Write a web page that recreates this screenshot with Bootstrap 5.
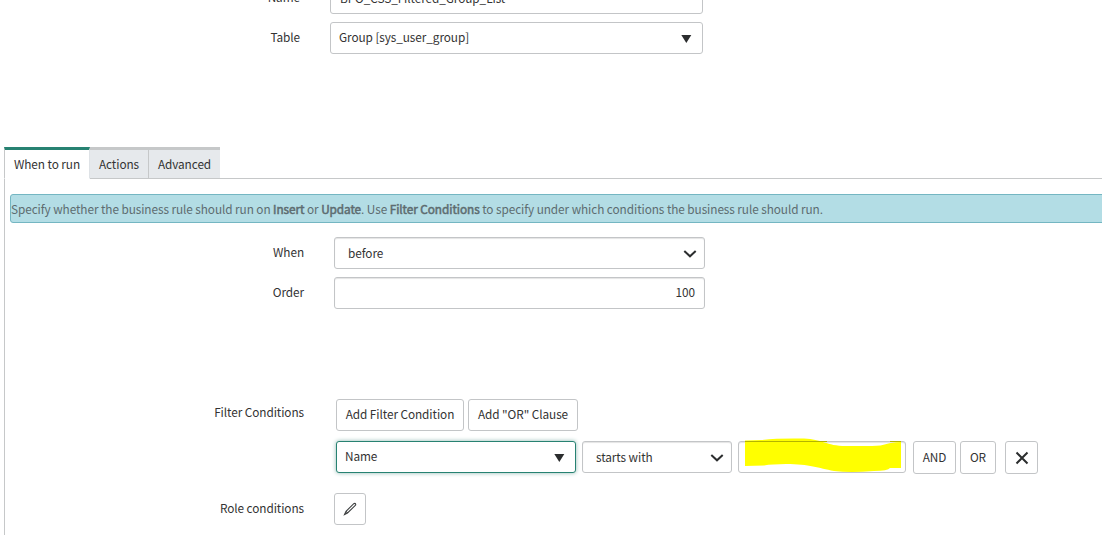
<!DOCTYPE html>
<html lang="en">
<head>
<meta charset="utf-8">
<meta name="viewport" content="width=device-width, initial-scale=1">
<title>Business Rule</title>
<link rel="stylesheet" href="https://cdn.jsdelivr.net/npm/bootstrap@5.3.0/dist/css/bootstrap.min.css">
<style>
body{font-family:"Noto Sans CJK SC","Noto Sans",sans-serif;font-size:11.8px;letter-spacing:-.075px;line-height:18px;color:#333;background:#fff}
.page{height:535px}
.head-fields{height:165px;margin-top:-18px}
.field-label{flex:none;width:300px;text-align:right;line-height:30px}
.rule-panel .field-label{width:299px}
.box{height:32px;border:1px solid #c3c5c7;border-radius:3px;background:#fff;padding:0 8px;line-height:28px;white-space:nowrap;color:inherit;font-size:inherit;letter-spacing:inherit}
.box.d-flex>span{margin-top:-2px}
.w-head{width:373px;margin-left:30px}
.w-main{width:371px;margin-left:30px}
.box.inset-top{box-shadow:inset 0 1px 1px #e4e4e4}
.box.choice{padding:1px 7px 0 13px}
.rule-tabs{padding-left:4px;height:32px;border:0;flex-wrap:nowrap}
.rule-tabs .nav-link{height:32px;border:0;border-radius:0;border-top:3px solid #c6c8c9;border-bottom:1px solid #c6c8c9;border-right:1px solid #c6c8c9;background:#e6e9ec;color:#333;padding:0;text-align:center;line-height:27px;margin:0}
.rule-tabs .nav-link.active{border-top-color:#278272;border-left:1px solid #c6c8c9;border-bottom-color:#fff;background:#fff;color:#333}
.tab-rule{border-bottom:1px solid #c6c8c9}
.rule-panel{margin-left:4px;height:356px;border-left:1px solid #c6c8c9;padding-top:15px}
.info{height:29px;margin:0 -4px 14px 5px;border:1px solid #74b6c2;border-radius:3px;background:#b3dde5;color:#5d6c70;padding:0;line-height:27px;white-space:nowrap}
.info b{font-weight:400;-webkit-text-stroke:.5px #5d6c70}
.focused{border-color:#278272!important;box-shadow:0 0 4px #8fb9b2}
.btn.box{padding:0;text-align:center;flex:none}
.btn.box.text-btn{padding-bottom:2px}
svg{display:block;flex:none}
.marker{position:absolute;left:5px;top:-5px}
</style>
</head>
<body>
<div class="page overflow-hidden">
  <section class="head-fields">
    <div class="d-flex mb-2"><label class="field-label">Name</label><div class="box w-head" style="line-height:30px"><span style="margin-left:1px">BPO_CSS_Filtered_Group_List</span></div></div>
    <div class="d-flex"><label class="field-label">Table</label>
      <div class="box w-head d-flex justify-content-between align-items-center"><span>Group [sys_user_group]</span><svg width="18" height="12" viewBox="0 0 18 12"><path d="M5.300 3h10l-5 8z" fill="#2b2d2e"/></svg></div></div>
  </section>
  <nav class="d-flex">
    <div class="nav nav-tabs rule-tabs">
      <a class="nav-link active" style="width:86px">When to run</a>
      <a class="nav-link" style="width:59px">Actions</a>
      <a class="nav-link" style="width:71px;border-right:0">Advanced</a>
    </div>
    <div class="tab-rule flex-grow-1"></div>
  </nav>
  <section class="rule-panel">
    <div class="alert info">Specify whether the business rule should run on <b>Insert</b> or <b>Update</b>. Use <b>Filter Conditions</b> to specify under which conditions the business rule should run.</div>
    <div class="d-flex mb-2"><label class="field-label">When</label>
      <div class="box choice w-main inset-top d-flex justify-content-between align-items-center"><span>before</span><svg width="14" height="10" viewBox="0 0 14 10"><path d="M1.300 2l5.700 5.300L12.700 2" fill="none" stroke="#2b2d2e" stroke-width="2"/></svg></div></div>
    <div class="d-flex"><label class="field-label">Order</label><div class="box w-main inset-top text-end" style="padding-right:9px">100</div></div>
    <div class="d-flex" style="margin-top:90px"><label class="field-label" style="line-height:26px">Filter Conditions</label>
      <div style="margin-left:32px">
        <div class="d-flex gap-1" style="margin-bottom:10px">
          <button class="btn box text-btn" style="width:128px">Add Filter Condition</button>
          <button class="btn box text-btn" style="width:110px">Add "OR" Clause</button>
        </div>
        <div class="d-flex">
          <div class="box focused d-flex justify-content-between align-items-center" style="width:240px"><span>Name</span><svg width="18" height="12" viewBox="0 0 18 12"><path d="M5.300 3h10l-5 8z" fill="#2b2d2e"/></svg></div>
          <div class="box choice inset-top d-flex justify-content-between align-items-center" style="width:150px;margin-left:6px"><span>starts with</span><svg width="14" height="10" viewBox="0 0 14 10"><path d="M1.300 2l5.700 5.300L12.700 2" fill="none" stroke="#2b2d2e" stroke-width="2"/></svg></div>
          <div class="box inset-top position-relative" style="width:168px;margin-left:6px"><svg class="marker" width="160" height="36" viewBox="0 0 160 36"><path d="M1 3.500L17 3Q34 1 60 1.500C78 2 82 9 102 9H128C142 9 143 5 157 5V31H146Q144 34 130 34Q106 36 90 34C74 31 66 27 42 27Q28 27 20 28.500L1 29z" fill="#ff0"/><path d="M1 4.500H157" stroke="#b4b400" stroke-width="1" stroke-dasharray="82 63 11"/></svg></div>
          <button class="btn box text-btn" style="width:43px;height:33px;margin-left:7px">AND</button>
          <button class="btn box text-btn" style="width:36px;height:33px;margin-left:4px">OR</button>
          <button class="btn box d-flex justify-content-center align-items-center" aria-label="Remove" style="width:33px;height:33px;margin-left:9px"><svg width="14" height="14" viewBox="0 0 14 14"><path d="M1.500 1.500l11 11M12.500 1.500L1.500 12.500" stroke="#2b2d2e" stroke-width="2"/></svg></button>
        </div>
      </div></div>
    <div class="d-flex" style="margin-top:19px"><label class="field-label">Role conditions</label>
      <button class="btn box d-flex justify-content-center align-items-center" aria-label="Edit" style="width:32px;margin-left:30px"><svg width="14" height="14" viewBox="0 0 14 14"><path d="M1.500 12.500L3 9.300 10.800 1.700Q12 .9 12.600 2Q13 2.800 12.300 3.400L4.500 11zM3 9.300l1.500 1.700" fill="none" stroke="#3c3e3f" stroke-width="1.050"/></svg></button></div>
  </section>
</div>
<script src="https://cdn.jsdelivr.net/npm/bootstrap@5.3.0/dist/js/bootstrap.bundle.min.js"></script>
</body>
</html>
